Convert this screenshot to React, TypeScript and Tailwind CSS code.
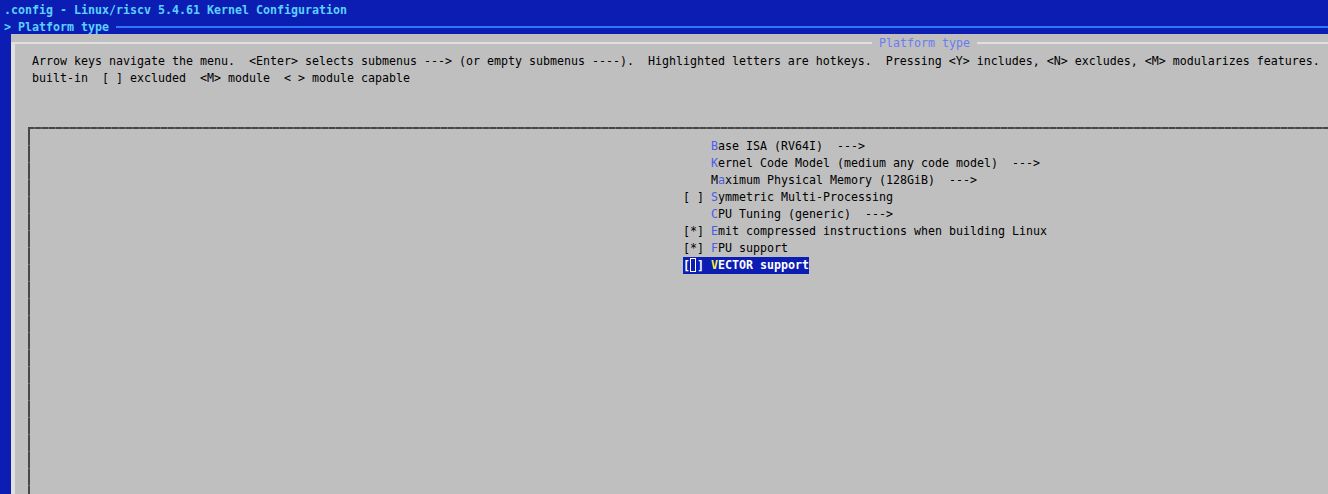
import React from "react";

const HK = "text-[#4a5ce8]";

function Item({ pre, hot, rest, lead = "" }: { pre: string; hot: string; rest: string; lead?: string }) {
  return (
    <div className="h-[17px] whitespace-pre text-black">
      {pre}
      {lead}
      <span className={HK}>{hot}</span>
      {rest}
    </div>
  );
}

export default function App() {
  return (
    <div className="w-[1328px] h-[494px] overflow-hidden bg-[#0b1db3] flex flex-col font-['DejaVu_Sans_Mono','Liberation_Mono',monospace] text-[11.63px] leading-[17px]">
      <div className="h-[17px] shrink-0 pl-[4px] pt-[2px] whitespace-pre font-bold text-[#5ad2ff]">
        .config - Linux/riscv 5.4.61 Kernel Configuration
      </div>
      <div className="h-[17px] shrink-0 pl-[4px] flex items-start font-bold text-[#5ad2ff]">
        <span className="whitespace-pre pt-[2px]">&gt; Platform type </span>
        <div className="flex-1 h-[2px] mt-[9px] bg-[#2f78f5]" />
      </div>
      <div className="ml-[11px] flex-1 min-h-0 bg-[#bfbfbf] pt-[8px] flex flex-col overflow-hidden">
        <div className="flex-1 min-h-0 flex flex-col border-l-[4px] border-[#e0e0e0]">
          <div className="h-[9px] shrink-0 flex items-start">
            <div className="w-[857px] h-[2px] bg-[#e0e0e0]" />
            <span className="-mt-[7px] h-[17px] whitespace-pre px-[7px] text-[#6b7cf0] bg-[#bfbfbf]">Platform type</span>
            <div className="flex-1 h-[2px] bg-[#e0e0e0]" />
          </div>
          <div className="pl-[17px] pt-[2px] text-black whitespace-pre overflow-hidden">
            <div className="h-[17px]">
              Arrow keys navigate the menu.  &lt;Enter&gt; selects submenus ---&gt; (or empty submenus ----).  Highlighted letters are hotkeys.  Pressing &lt;Y&gt; includes, &lt;N&gt; excludes, &lt;M&gt; modularizes features.
            </div>
            <div className="h-[17px]">built-in  [ ] excluded  &lt;M&gt; module  &lt; &gt; module capable</div>
          </div>
          <div className="ml-[13px] mt-[40px] flex-1 min-h-0 flex flex-col">
            <div className="h-[2px] shrink-0 bg-[repeating-linear-gradient(90deg,#474747_0px,#474747_6px,#6e6e6e_6px,#6e6e6e_7px)]" />
            <div className="flex-1 min-h-0 flex">
              <div className="w-[2px] shrink-0 bg-[repeating-linear-gradient(180deg,#474747_0px,#474747_16px,#6e6e6e_16px,#6e6e6e_17px)]" />
              <div className="flex-1 pt-[9px] pl-[653px]">
                <Item pre="    " hot="B" rest="ase ISA (RV64I)  --->" />
                <Item pre="    " hot="K" rest="ernel Code Model (medium any code model)  --->" />
                <Item pre="    " lead="M" hot="a" rest="ximum Physical Memory (128GiB)  --->" />
                <Item pre="[ ] " hot="S" rest="ymmetric Multi-Processing" />
                <Item pre="    " hot="C" rest="PU Tuning (generic)  --->" />
                <Item pre="[*] " hot="E" rest="mit compressed instructions when building Linux" />
                <Item pre="[*] " hot="F" rest="PU support" />
                <div className="h-[17px] whitespace-pre">
                  <span className="inline-block bg-[#0b1db3] text-white font-bold">
                    [
                    <span className="relative inline-block w-[7px] h-[15px] align-[-3px]">
                      <span className="absolute left-[0px] top-[1px] w-[6px] h-[14px] border border-white" />
                    </span>
                    ] <span className="text-[#f5ef3c]">V</span>ECTOR support
                  </span>
                </div>
              </div>
            </div>
          </div>
        </div>
      </div>
    </div>
  );
}
